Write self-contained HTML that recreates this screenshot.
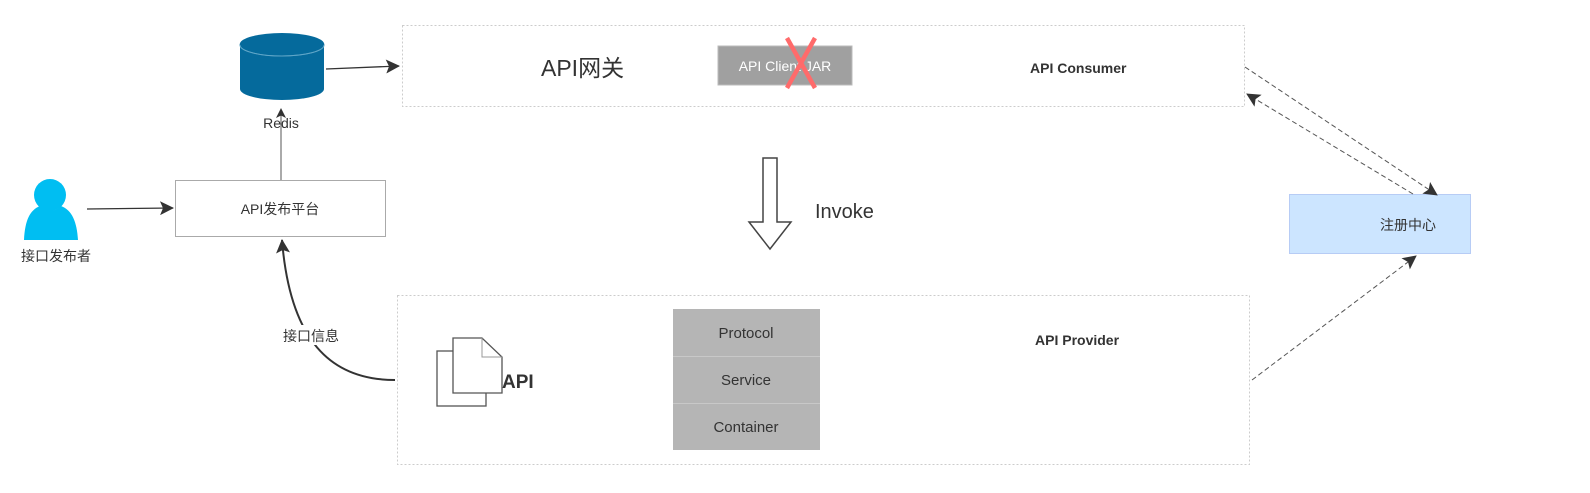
<!DOCTYPE html>
<html><head><meta charset="utf-8"><style>
html,body{margin:0;padding:0;background:#fff;width:1590px;height:493px;overflow:hidden}
svg text{font-family:"Liberation Sans","Noto Sans CJK SC",sans-serif;fill:#333}
</style></head><body>
<svg width="1590" height="493" viewBox="0 0 1590 493" xmlns="http://www.w3.org/2000/svg">
<defs>
<marker id="ah" markerWidth="10" markerHeight="10" refX="9" refY="5" orient="auto" markerUnits="userSpaceOnUse" viewBox="0 0 10 10">
<path d="M0,0 L10,5 L0,10 L2.5,5 Z" fill="#333"/></marker>
<marker id="ah2" markerWidth="14" markerHeight="14" refX="13" refY="7" orient="auto" markerUnits="userSpaceOnUse" viewBox="0 0 14 14">
<path d="M0,0 L14,7 L0,14 L3,7 Z" fill="#333"/></marker>
</defs>
<!-- top box -->
<rect x="402.5" y="25.5" width="842" height="81" fill="#fff" stroke="#ccc" stroke-dasharray="2,2"/>
<text x="541" y="76" font-size="23">API网关</text>
<rect x="718" y="46" width="134" height="39" fill="#a0a0a0" stroke="#bbb"/>
<text x="785" y="71" font-size="14" text-anchor="middle" style="fill:#fff">API Client JAR</text>
<path d="M787,38 L815,88 M815,38 L787,88" stroke="#ff6b6b" stroke-width="4.5"/>
<text x="1030" y="73" font-size="14" font-weight="bold">API Consumer</text>
<!-- redis -->
<path d="M240,45 L240,89 A42,11 0 0 0 324,89 L324,45" fill="#056a9c"/>
<ellipse cx="282" cy="45" rx="42" ry="11" fill="#056a9c" stroke="#4d96bb" stroke-width="1"/>
<ellipse cx="282" cy="44" rx="42" ry="11" fill="#056a9c"/>
<path d="M240,45 A42,11 0 0 0 324,45" fill="none" stroke="#5fa6c8" stroke-width="1"/>
<text x="281" y="128" font-size="14" text-anchor="middle">Redis</text>
<path d="M326,69 L399,66" stroke="#333" stroke-width="1.3" fill="none" marker-end="url(#ah2)"/>
<!-- person -->
<circle cx="50" cy="195" r="16" fill="#00bef2"/>
<path d="M24,240 C25,220 30,210 40,206 C45,212 56,212 61,206 C72,210 77,222 78,240 Z" fill="#00bef2"/>
<text x="56" y="261" font-size="14" text-anchor="middle">接口发布者</text>
<path d="M87,209 L173,208" stroke="#333" stroke-width="1.3" fill="none" marker-end="url(#ah2)"/>
<!-- platform -->
<rect x="175.5" y="180.5" width="210" height="56" fill="#fff" stroke="#aaa"/>
<text x="280" y="214" font-size="14" text-anchor="middle">API发布平台</text>
<path d="M281,180 L281,109" stroke="#555" stroke-width="1" fill="none" marker-end="url(#ah)"/>
<!-- curved -->
<path d="M395,380 C330,380 290,340 282,240" stroke="#333" stroke-width="2" fill="none" marker-end="url(#ah2)"/>
<rect x="278" y="325" width="66" height="20" fill="#fff"/>
<text x="311" y="341" font-size="14" text-anchor="middle">接口信息</text>
<!-- invoke arrow -->
<path d="M763,158 L777,158 L777,222 L791,222 L770,249 L749,222 L763,222 Z" fill="#fff" stroke="#444" stroke-width="1.5"/>
<text x="815" y="218" font-size="20">Invoke</text>
<!-- bottom box -->
<rect x="397.5" y="295.5" width="852" height="169" fill="#fff" stroke="#ccc" stroke-dasharray="2,2"/>
<rect x="437" y="351" width="49" height="55" fill="#fff" stroke="#555" stroke-width="1.3"/>
<path d="M453,338 L482,338 L502,357 L502,393 L453,393 Z" fill="#fff" stroke="#555" stroke-width="1.3"/>
<path d="M482,338 L482,357 L502,357" fill="none" stroke="#999" stroke-width="1"/>
<text x="502" y="388" font-size="19" font-weight="bold">API</text>
<rect x="673" y="309" width="147" height="141" fill="#b5b5b5"/>
<path d="M673,356.5 L820,356.5 M673,403.5 L820,403.5" stroke="#c8c8c8"/>
<text x="746" y="338" font-size="15" text-anchor="middle">Protocol</text>
<text x="746" y="385" font-size="15" text-anchor="middle">Service</text>
<text x="746" y="432" font-size="15" text-anchor="middle">Container</text>
<text x="1035" y="345" font-size="14" font-weight="bold">API Provider</text>
<!-- registry -->
<rect x="1289.5" y="194.5" width="181" height="59" fill="#cce5ff" stroke="#b7ccf5"/>
<text x="1408" y="230" font-size="14" text-anchor="middle">注册中心</text>
<g stroke="#555" stroke-width="1" stroke-dasharray="5,3" fill="none">
<path d="M1245,67 L1437,195" marker-end="url(#ah2)"/>
<path d="M1413,194 L1247,94" marker-end="url(#ah2)"/>
<path d="M1252,380 L1416,256" marker-end="url(#ah2)"/>
</g>
</svg>
</body></html>
